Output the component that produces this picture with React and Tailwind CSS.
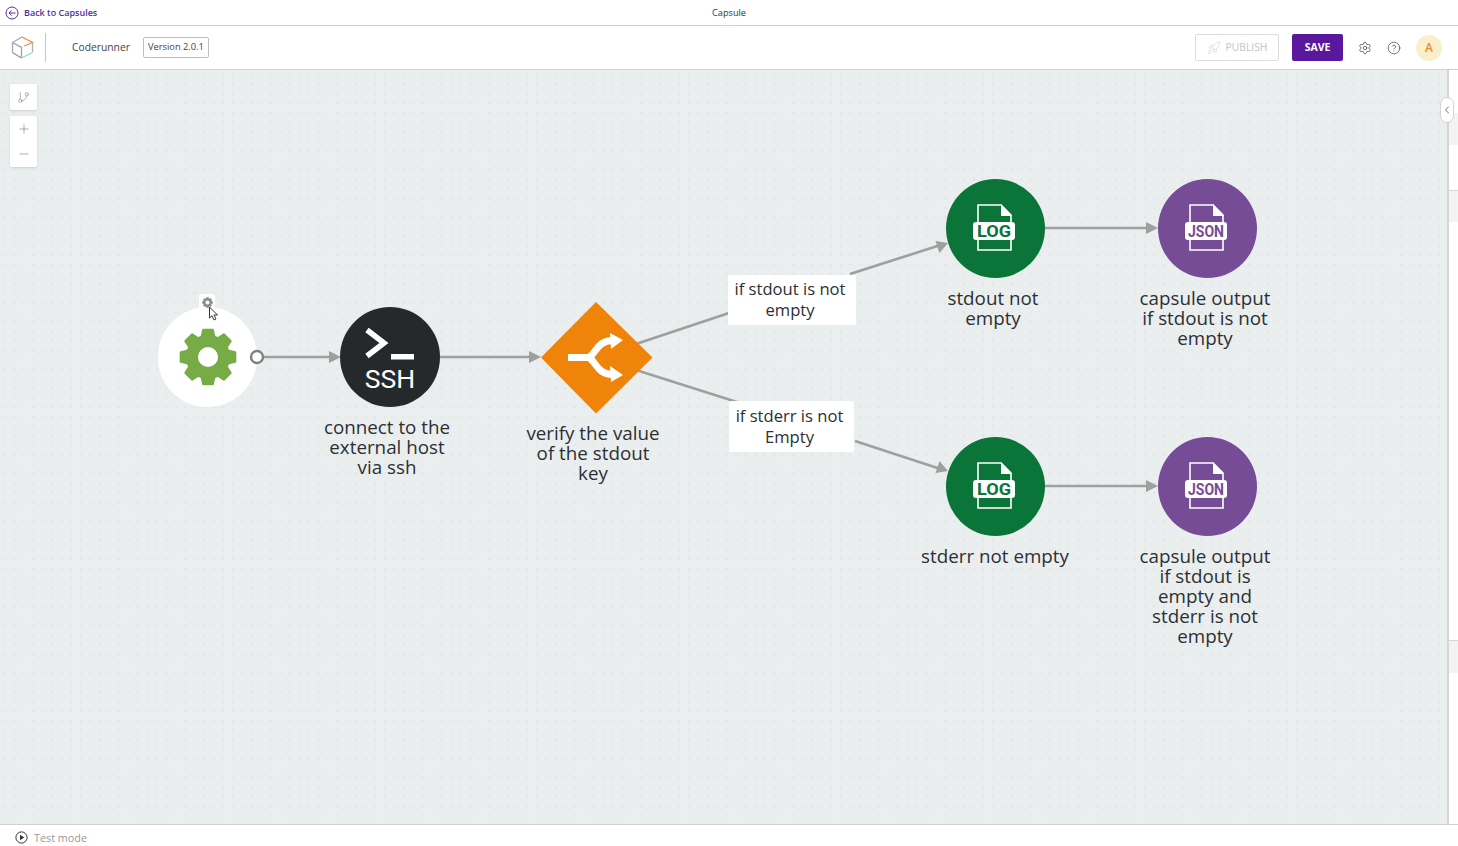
import { ChevronLeft, CircleHelp, Settings, Plus, Minus, GitBranch, Rocket } from 'lucide-react'

// 8 tooth gear for the start node
const gearPath = (() => {
  const pts = []
  for (let i = 0; i < 8; i++) {
    const a = (i * Math.PI) / 4 - Math.PI / 2
    const step = [
      [-0.3, 21],
      [-0.17, 27.5],
      [0.17, 27.5],
      [0.3, 21],
    ]
    step.forEach(([da, r]) => {
      pts.push(`${(30 + r * Math.cos(a + da)).toFixed(2)} ${(30 + r * Math.sin(a + da)).toFixed(2)}`)
    })
  }
  return `M${pts.join('L')}Z`
})()

function FileNode({ className, color, label, textLength }) {
  return (
    <div className={`absolute w-[101px] h-[101px] rounded-full ${className}`}>
      <svg width="101" height="101" viewBox="0 0 101 101">
        <circle cx="50.5" cy="50.5" r="49.5" fill={color} />
        <path d="M33 27H56L66 37V72H33Z" fill="none" stroke="#fff" strokeWidth="1.6" />
        <path d="M56 26L67 38H56Z" fill="#fff" />
        <rect x="28" y="44" width="42" height="18" rx="3" fill="#fff" />
        <text
          x="49"
          y="59"
          textAnchor="middle"
          fill={color}
          fontSize="17"
          fontWeight="700"
          textLength={textLength}
          lengthAdjust="spacingAndGlyphs"
          className="font-['Roboto',sans-serif]"
        >
          {label}
        </text>
      </svg>
    </div>
  )
}

function NodeLabel({ className, children }) {
  return (
    <div className={`absolute w-[180px] text-center text-[18.8px] leading-[20px] text-[#2c3033] ${className}`}>
      {children}
    </div>
  )
}

function EdgeLabel({ className, children }) {
  return (
    <div className={`absolute flex items-center justify-center pr-[4px] pb-[2px] bg-white rounded-[2px] text-center text-[16.6px] leading-[21px] text-[#2c3033] ${className}`}>
      <span>{children}</span>
    </div>
  )
}

export default function App() {
  return (
    <div className="h-screen w-full flex flex-col overflow-hidden bg-white font-['Open_Sans',sans-serif]">
      {/* Top strip */}
      <div className="relative h-[26px] shrink-0 border-b border-[#cfcfcf] flex items-center justify-center">
        <a className="absolute left-[5px] top-[6px] flex items-center gap-[5px] text-[9px] font-semibold leading-[14px] text-[#52309a]">
          <svg width="14" height="14" viewBox="0 0 14 14" fill="none" stroke="#5a2ca0" strokeWidth="1">
            <circle cx="7" cy="7" r="6" />
            <path d="M10.5 7H4M6.5 4.5L4 7L6.5 9.5" />
          </svg>
          Back to Capsules
        </a>
        <span className="text-[9.2px] text-[#333]">Capsule</span>
      </div>

      {/* Toolbar */}
      <div className="h-[44px] shrink-0 border-b border-[#cfcfcf] flex items-center pl-[11px] pr-[16px]">
        <svg width="23" height="23" viewBox="0 0 23 23" fill="none" strokeWidth="1.3" className="shrink-0">
          <path d="M11 1L1.5 6.5V16.5" stroke="#a9a3c4" />
          <path d="M1.5 16.5L10.5 22" stroke="#8f95a6" />
          <path d="M1.5 6.5L10.5 11.5V22" stroke="#9aa0ab" />
          <path d="M11 1L21.5 6.5L13 10" stroke="#ef8a45" />
          <path d="M21.5 6.5V16.5" stroke="#b7b0a0" />
          <path d="M21.5 16.5L10.5 22" stroke="#8fdcd2" />
        </svg>
        <div className="w-px h-[29px] bg-[#c8c8c8] ml-[11px]" />
        <span className="ml-[26px] text-[10.3px] text-[#444]">Coderunner</span>
        <span className="ml-[13px] h-[21px] w-[66px] pb-[2px] border border-[#bdbdbd] rounded-[2px] flex items-center justify-center text-[9.3px] text-[#444]">
          Version 2.0.1
        </span>
        <div className="ml-auto flex items-center">
          <button className="h-[27px] w-[84px] border border-[#dcdcdc] rounded-[2px] flex items-center justify-center gap-[5px] text-[10.3px] text-[#c4c4c4]">
            <Rocket size={14} strokeWidth={1.2} color="#d4d4d4" />
            PUBLISH
          </button>
          <button className="ml-[13px] h-[27px] w-[51px] rounded-[2px] bg-[#5a189f] text-[10.5px] font-bold text-white">
            SAVE
          </button>
          <Settings size={14} strokeWidth={1.3} color="#444" className="ml-[15px]" />
          <CircleHelp size={14} strokeWidth={1.2} color="#444" className="ml-[15px]" />
          <span className="ml-[15px] w-[26px] h-[26px] rounded-full bg-[#fbeecb] flex items-center justify-center text-[12px] font-semibold text-[#ec8a2e]">
            A
          </span>
        </div>
      </div>

      {/* Workspace */}
      <div className="relative flex-1 flex min-h-0">
        <div className="relative flex-1 bg-[#ebeeef] bg-[radial-gradient(#e1e4e6_0.7px,transparent_0.8px)] bg-[size:9.5px_9.5px]">
          {/* Graph tools */}
          <div className="absolute left-[10px] top-[14px] flex flex-col gap-[6px]">
            <div className="w-[27px] h-[26px] bg-white rounded-[2px] shadow-sm flex items-center justify-center">
              <GitBranch size={13} strokeWidth={1} color="#777" />
            </div>
            <div className="w-[27px] h-[51px] bg-white rounded-[2px] shadow-sm flex flex-col items-center justify-around py-[1px]">
              <Plus size={14} strokeWidth={1} color="#777" />
              <Minus size={14} strokeWidth={1} color="#777" />
            </div>
          </div>

          {/* Edges */}
          <svg className="absolute inset-0" width="1447" height="754" viewBox="0 70 1447 754" fill="none">
            <g stroke="#9f9f9f" strokeWidth="2.6">
              <path d="M263 357H332" />
              <path d="M636 344L735 311" />
              <path d="M440 357H532" />
              <path d="M636 370L740 403" />
              <path d="M850 274L939 245.5" />
              <path d="M855 441L939 468.5" />
              <path d="M1045 228H1149" />
              <path d="M1045 486H1149" />
            </g>
            <g fill="#9f9f9f">
              <path d="M341 357L329 351V363Z" />
              <path d="M541 357L529 351V363Z" />
              <path d="M948 243L935.5 241L939.5 253Z" />
              <path d="M948 471L939.5 461L935.5 473Z" />
              <path d="M1158 228L1146 222V234Z" />
              <path d="M1158 486L1146 480V492Z" />
            </g>
          </svg>

          {/* Start node */}
          <div className="absolute left-[158px] top-[237px] w-[99px] h-[100px] rounded-full bg-white flex items-center justify-center">
            <svg width="60" height="60" viewBox="0 0 60 60">
              <path d={gearPath} fill="#76ab45" stroke="#76ab45" strokeWidth="2.5" strokeLinejoin="round" />
              <circle cx="30" cy="30" r="10" fill="#fff" />
            </svg>
          </div>
          <svg className="absolute left-[249px] top-[279px]" width="16" height="16" viewBox="0 0 16 16">
            <circle cx="8" cy="8" r="6" fill="#fff" stroke="#7f7f7f" strokeWidth="2.4" />
          </svg>
          <div className="absolute left-[199px] top-[224px] w-[16px] h-[16px] rounded-[3px] bg-white flex items-center justify-center">
            <svg width="11" height="11" viewBox="0 0 60 60">
              <path d={gearPath} fill="#8a8a8a" stroke="#8a8a8a" strokeWidth="4" strokeLinejoin="round" />
              <circle cx="30" cy="30" r="11" fill="#fff" />
            </svg>
          </div>

          {/* SSH node */}
          <div className="absolute left-[340px] top-[237px] w-[100px] h-[100px] rounded-full bg-[#26292c]">
            <svg width="100" height="100" viewBox="0 0 100 100">
              <path d="M27 23L44 36L27 49" fill="none" stroke="#fff" strokeWidth="5.5" />
              <rect x="51" y="47" width="23" height="5.5" fill="#fff" />
              <text x="50" y="80.5" textAnchor="middle" fill="#fff" fontSize="26.5" className="font-['Roboto',sans-serif]">
                SSH
              </text>
            </svg>
          </div>

          {/* Condition diamond */}
          <div className="absolute left-[540px] top-[231px] w-[113px] h-[113px]">
            <svg width="113" height="113" viewBox="0 0 113 113">
              <path d="M56 1L112.5 56.5L56 112.5L1 56.5Z" fill="#f0830a" />
              <path d="M28 56.5H47C55 56.5 56 39 73 39.5M47 56.5C55 56.5 56 74 73 73.5" fill="none" stroke="#fff" strokeWidth="7" />
              <path d="M83 39L70 32L71 48Z" fill="#fff" />
              <path d="M83 74L70 65L71 81Z" fill="#fff" />
            </svg>
          </div>

          <FileNode className="left-[945px] top-[108px]" color="#0a7439" label="LOG" textLength="34" />
          <FileNode className="left-[1157px] top-[108px]" color="#764c96" label="JSON" textLength="36" />
          <FileNode className="left-[945px] top-[366px]" color="#0a7439" label="LOG" textLength="34" />
          <FileNode className="left-[1157px] top-[366px]" color="#764c96" label="JSON" textLength="36" />

          <EdgeLabel className="left-[728px] top-[205px] w-[128px] h-[50px]">
            if stdout is not<br />empty
          </EdgeLabel>
          <EdgeLabel className="left-[729px] top-[331px] w-[125px] h-[51px]">
            if stderr is not<br />Empty
          </EdgeLabel>

          <NodeLabel className="left-[297px] top-[347px]">
            connect to the<br />external host<br />via ssh
          </NodeLabel>
          <NodeLabel className="left-[503px] top-[353px]">
            verify the value<br />of the stdout<br />key
          </NodeLabel>
          <NodeLabel className="left-[903px] top-[218px]">
            stdout not<br />empty
          </NodeLabel>
          <NodeLabel className="left-[1115px] top-[218px]">
            capsule output<br />if stdout is not<br />empty
          </NodeLabel>
          <NodeLabel className="left-[905px] top-[476px]">stderr not empty</NodeLabel>
          <NodeLabel className="left-[1115px] top-[476px]">
            capsule output<br />if stdout is<br />empty and<br />stderr is not<br />empty
          </NodeLabel>

          {/* Mouse pointer */}
          <svg className="absolute left-[208px] top-[236px]" width="11" height="16" viewBox="0 0 11 16">
            <path d="M1.5 1V12L4 9.8L6 14L8 13L6 9H9.5Z" fill="#fff" stroke="#222" strokeWidth="0.9" />
          </svg>
        </div>

        {/* Collapsed side panel */}
        <div className="w-[11px] shrink-0 border-l-2 border-[#d4d6d8] bg-white">
          <div className="mt-[43px] h-[32px] bg-[#f3f3f3]" />
          <div className="mt-[45px] h-[32px] bg-[#f3f3f3] border-t border-[#d8d8d8]" />
          <div className="mt-[418px] h-[33px] bg-[#f3f3f3] border-t border-[#d8d8d8]" />
        </div>
        <button className="absolute left-[1440px] top-[27px] w-[14px] h-[26px] rounded-full bg-white border border-[#d4d4d4] flex items-center justify-center">
          <ChevronLeft size={12} strokeWidth={1.6} color="#444" />
        </button>
      </div>

      {/* Footer */}
      <div className="h-[22px] shrink-0 border-t border-[#cfcfcf] flex items-start pt-[6px] pl-[15px] text-[10.8px] leading-[14px] text-[#999]">
        <svg width="13" height="13" viewBox="0 0 13 13" fill="none">
          <circle cx="6.5" cy="6.5" r="5.6" stroke="#333" strokeWidth="1" />
          <path d="M5 3.8V9.2L9.3 6.5Z" fill="#333" />
        </svg>
        <span className="ml-[6px]">Test mode</span>
      </div>
    </div>
  )
}
